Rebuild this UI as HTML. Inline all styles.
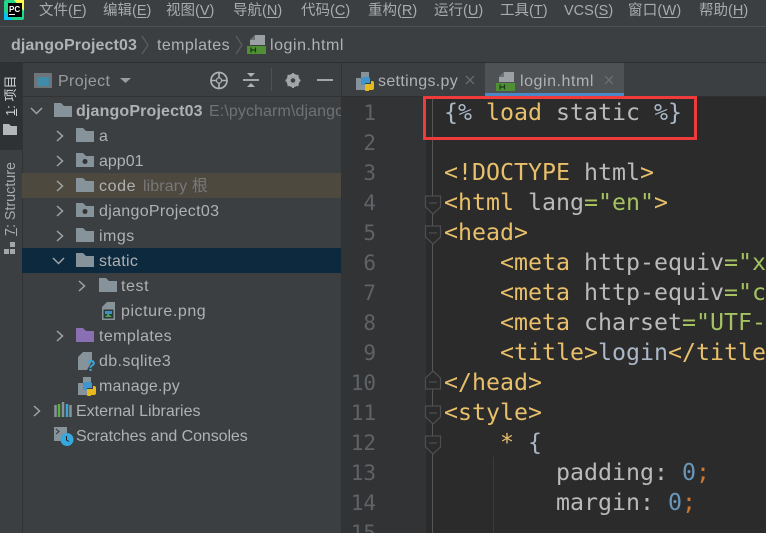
<!DOCTYPE html>
<html><head><meta charset="utf-8">
<style>
html,body{margin:0;padding:0;width:766px;height:533px;overflow:hidden;background:#3c3f41}
body{position:relative;font-family:"Liberation Sans","Noto Sans CJK SC",sans-serif;color:#afb1b3;font-size:15px}
.a{position:absolute;white-space:nowrap}
.b{position:absolute}
.m{top:2px;line-height:18px;font-size:14.5px;color:#a9abad}
.m u{text-decoration-thickness:1px;text-underline-offset:2px}
.t{line-height:25px;height:25px;font-size:16px;color:#afb1b3}
.c{position:absolute;white-space:pre;font-family:"DejaVu Sans Mono","Liberation Mono",monospace;font-size:23.25px;line-height:30px;height:30px;color:#a9b7c6;left:444px}
.n{position:absolute;font-family:"DejaVu Sans Mono","Liberation Mono",monospace;font-size:21px;line-height:30px;height:30px;color:#606366;text-align:right;width:34px;left:342px}
.o{color:#e8bf6a}.g{color:#a5c261}.k{color:#bababa}.w{color:#a9b7c6}.y{color:#e8bf6a}.bl{color:#6897bb}.r{color:#cc7832}
</style></head>
<body>
<!-- bars -->
<div class="b" style="left:0;top:26px;width:766px;height:1px;background:#515151"></div>
<div class="b" style="left:0;top:62px;width:766px;height:1px;background:#2d2f30"></div>
<!-- left strip -->
<div class="b" style="left:0;top:63px;width:22px;height:470px;background:#3c3f41"></div>
<div class="b" style="left:0;top:63px;width:22px;height:87px;background:#2f3234"></div>
<div class="b" style="left:22px;top:63px;width:1px;height:470px;background:#323232"></div>
<!-- editor -->
<div class="b" style="left:342px;top:63px;width:424px;height:470px;background:#3c3f41"></div>
<div class="b" style="left:342px;top:97px;width:424px;height:436px;background:#2b2b2b"></div>
<div class="b" style="left:342px;top:97px;width:84px;height:436px;background:#313335"></div>
<div class="b" style="left:432px;top:97px;width:1px;height:436px;background:#555"></div>
<div class="b" style="left:493px;top:457px;width:1px;height:76px;background:#3b3b3b"></div>
<div class="b" style="left:342px;top:96px;width:424px;height:1px;background:#2d2f30"></div>
<div class="b" style="left:23px;top:96px;width:318px;height:1px;background:#323232"></div>
<!-- tabs -->
<div class="b" style="left:485px;top:63px;width:139px;height:33px;background:#4e5254"></div>
<div class="b" style="left:485px;top:93px;width:139px;height:3px;background:#4a88c7"></div>
<div class="a" style="left:378px;top:71px;font-size:16px;letter-spacing:.33px;line-height:22px;color:#afb1b3">settings.py</div>
<div class="a" style="left:520px;top:71px;font-size:16px;letter-spacing:.55px;line-height:22px;color:#afb1b3">login.html</div>

<!-- menu -->
<div class="a m" style="left:39px">文件(<u>F</u>)</div>
<div class="a m" style="left:103px">编辑(<u>E</u>)</div>
<div class="a m" style="left:166px">视图(<u>V</u>)</div>
<div class="a m" style="left:233px">导航(<u>N</u>)</div>
<div class="a m" style="left:301px">代码(<u>C</u>)</div>
<div class="a m" style="left:368px">重构(<u>R</u>)</div>
<div class="a m" style="left:434px">运行(<u>U</u>)</div>
<div class="a m" style="left:500px">工具(<u>T</u>)</div>
<div class="a m" style="left:564px">VCS(<u>S</u>)</div>
<div class="a m" style="left:628px;letter-spacing:.2px">窗口(<u>W</u>)</div>
<div class="a m" style="left:699px">帮助(<u>H</u>)</div>

<!-- breadcrumb -->
<div class="a" style="left:11px;top:35px;line-height:22px;font-size:16px;letter-spacing:.1px;font-weight:bold;color:#afb1b3">djangoProject03</div>
<div class="a" style="left:157px;top:35px;line-height:22px;font-size:16px;letter-spacing:.4px;color:#afb1b3">templates</div>
<div class="a" style="left:270px;top:35px;line-height:22px;font-size:16px;letter-spacing:.55px;color:#afb1b3">login.html</div>

<!-- project header -->
<div class="a" style="left:58px;top:71px;line-height:22px;font-size:16px;letter-spacing:.35px;color:#9a9c9e">Project</div>

<!-- tree rows -->
<div class="b" style="left:22px;top:173px;width:319px;height:25px;background:#4d493f"></div>
<div class="b" style="left:22px;top:248px;width:319px;height:25px;background:#0d293e"></div>
<div class="a t" style="left:76px;top:99px;font-weight:bold;letter-spacing:.15px">djangoProject03</div>
<div class="a t" style="left:209px;top:99px;width:132px;overflow:hidden;color:#6f7173;letter-spacing:.1px">E:\pycharm\django</div>
<div class="a t" style="left:99px;top:124px">a</div>
<div class="a t" style="left:99px;top:149px">app01</div>
<div class="a t" style="left:99px;top:174px;letter-spacing:.6px">code</div>
<div class="a t" style="left:143px;top:174px;color:#77787a;letter-spacing:.1px">library 根</div>
<div class="a t" style="left:99px;top:199px;letter-spacing:.31px">djangoProject03</div>
<div class="a t" style="left:99px;top:224px;letter-spacing:.5px">imgs</div>
<div class="a t" style="left:99px;top:249px;letter-spacing:.3px">static</div>
<div class="a t" style="left:121px;top:274px;letter-spacing:.6px">test</div>
<div class="a t" style="left:121px;top:299px;letter-spacing:.55px">picture.png</div>
<div class="a t" style="left:99px;top:324px;letter-spacing:.4px">templates</div>
<div class="a t" style="left:99px;top:349px;letter-spacing:.37px">db.sqlite3</div>
<div class="a t" style="left:99px;top:374px;letter-spacing:.2px">manage.py</div>
<div class="a t" style="left:76px;top:399px">External Libraries</div>
<div class="a t" style="left:76px;top:424px;letter-spacing:-.08px">Scratches and Consoles</div>
<div class="b" style="left:341px;top:63px;width:1px;height:470px;background:#323232"></div>

<!-- vertical side labels -->
<div class="a" style="left:2px;top:116px;line-height:18px;font-size:13px;color:#d0d2d4;transform-origin:0 0;transform:rotate(-90deg);"><u>1</u>: 项目</div>
<div class="a" style="left:2px;top:236px;line-height:18px;font-size:14.3px;color:#a9abad;transform-origin:0 0;transform:rotate(-90deg);"><u>7</u>: Structure</div>

<!-- line numbers -->
<div class="n" style="top:98px">1</div>
<div class="n" style="top:128px">2</div>
<div class="n" style="top:158px">3</div>
<div class="n" style="top:188px">4</div>
<div class="n" style="top:218px">5</div>
<div class="n" style="top:248px">6</div>
<div class="n" style="top:278px">7</div>
<div class="n" style="top:308px">8</div>
<div class="n" style="top:338px">9</div>
<div class="n" style="top:368px">10</div>
<div class="n" style="top:398px">11</div>
<div class="n" style="top:428px">12</div>
<div class="n" style="top:458px">13</div>
<div class="n" style="top:488px">14</div>
<div class="n" style="top:518px">15</div>

<!-- code -->
<div class="c" style="top:98px"><span style="color:#a9b7c6">{%</span> <span class="o">load</span> <span class="k">static</span> <span style="color:#a9b7c6">%}</span></div>
<div class="c" style="top:158px"><span class="o">&lt;!DOCTYPE</span> <span class="k">html</span><span class="o">&gt;</span></div>
<div class="c" style="top:188px"><span class="o">&lt;html</span> <span class="k">lang</span><span class="g">="en"</span><span class="o">&gt;</span></div>
<div class="c" style="top:218px"><span class="o">&lt;head&gt;</span></div>
<div class="c" style="top:248px">    <span class="o">&lt;meta</span> <span class="k">http-equiv</span><span class="g">="x</span></div>
<div class="c" style="top:278px">    <span class="o">&lt;meta</span> <span class="k">http-equiv</span><span class="g">="c</span></div>
<div class="c" style="top:308px">    <span class="o">&lt;meta</span> <span class="k">charset</span><span class="g">="UTF-</span></div>
<div class="c" style="top:338px">    <span class="o">&lt;title&gt;</span><span class="w">login</span><span class="o">&lt;/title</span></div>
<div class="c" style="top:368px"><span class="o">&lt;/head&gt;</span></div>
<div class="c" style="top:398px"><span class="o">&lt;style&gt;</span></div>
<div class="c" style="top:428px">    <span class="y">*</span> <span class="w">{</span></div>
<div class="c" style="top:458px">        <span class="k">padding</span><span class="k">:</span> <span class="bl">0</span><span class="r">;</span></div>
<div class="c" style="top:488px">        <span class="k">margin</span><span class="k">:</span> <span class="bl">0</span><span class="r">;</span></div>

<!-- red highlight -->
<div class="b" style="left:423px;top:96px;width:268px;height:38px;border:3px solid #ef3b3b"></div>

<!-- icons -->
<svg class="b" style="left:0;top:0" width="766" height="533" viewBox="0 0 766 533" fill="none">
<defs>
<path id="f" d="M0 0h7l3 3h8v11H0z" fill="#87939a"/>
<path id="cr" d="M0 0l5.500 5L0 10" stroke="#a0a2a4" stroke-width="1.500"/>
<path id="cd" d="M0 0l5.500 5.500L11 0" stroke="#a0a2a4" stroke-width="1.500"/>
<g id="py"><path d="M5 0h8v6H5zM0 6h5v12H0zM5 13h4v5H5z" fill="#87939a"/><path d="M7 5h5a2 2 0 0 1 2 2v4H9v2H5V8a3 3 0 0 1 2-3z" fill="#3f96cf"/><path d="M15 9h1a2 2 0 0 1 2 2v5a2 2 0 0 1-2 2h-6v-4h5z" fill="#e8b91c"/><path d="M9 12h6v3h-2v4h-3a1 1 0 0 1-1-1z" fill="#e8b91c"/></g>
<g id="ht"><path d="M8 0h10v10H3V5z" fill="#9aa0a3"/><path d="M3 5l5-5v5z" fill="#6b7073"/><rect x="0" y="11" width="19" height="8" fill="#4f9034"/><path d="M4 12.500v5M8.500 12.500v5M4 15h4.500" stroke="#1a3a12" stroke-width="1.200"/></g>
</defs>
<!-- PC logo -->
<rect x="4" y="0" width="20" height="20" rx="2" fill="#21d789"/><path d="M14 0h10v11z" fill="#fcf84a"/><path d="M4 11l9 9H4z" fill="#07c3f2"/>
<rect x="8" y="3" width="14" height="14" fill="#000"/><text x="9" y="12" font-family="Liberation Sans" font-weight="bold" font-size="8" fill="#fff">PC</text><rect x="9" y="14" width="6" height="1" fill="#fff"/>
<!-- breadcrumb chevrons -->
<path d="M142 36l6 9-6 9M236 36l6 9-6 9" stroke="#5c5f61" stroke-width="1.200"/>
<use href="#ht" x="247" y="35"/>
<!-- project header icons -->
<rect x="34" y="73" width="18" height="15" fill="#6e7477"/><rect x="37" y="77" width="12" height="9" fill="#3f8ba8"/>
<path d="M120 78h11l-5.500 5z" fill="#9a9c9e"/>
<circle cx="219" cy="80.500" r="8" stroke="#afb1b3" stroke-width="1.700"/><circle cx="219" cy="80.500" r="2.600" stroke="#afb1b3" stroke-width="1.300"/><path d="M219 73v5M219 83v5M211 80.500h5.500M221.500 80.500h5.500" stroke="#afb1b3" stroke-width="1.600"/>
<path d="M243 80h16" stroke="#afb1b3" stroke-width="1.800"/><path d="M247 73h8l-4 4zM247 87h8l-4-4z" fill="#afb1b3"/>
<path d="M271.500 68v23" stroke="#4f5254"/>
<circle cx="293" cy="80.500" r="5" stroke="#a4a6a8" stroke-width="3.200"/><path d="M293 73v15M285.500 80.500h15M287.700 75.200l10.600 10.600M298.300 75.200l-10.600 10.600" stroke="#a4a6a8" stroke-width="2"/><circle cx="293" cy="80.500" r="2.200" fill="#3c3f41"/>
<path d="M317 80h16" stroke="#a4a6a8" stroke-width="2"/>
<!-- side icons -->
<path d="M3 124h6l2 2h6v9H3z" fill="#b4b6b8"/>
<path d="M10 242h5v5h-5zM4 249h5v5H4zM10 249h5v5h-5z" fill="#a4a6a8"/>
<!-- tree chevrons -->
<use href="#cd" x="31" y="108"/>
<use href="#cr" x="57" y="131"/><use href="#cr" x="57" y="156"/><use href="#cr" x="57" y="181"/><use href="#cr" x="57" y="206"/><use href="#cr" x="57" y="231"/>
<use href="#cd" x="53" y="258"/>
<use href="#cr" x="79" y="281"/><use href="#cr" x="57" y="331"/><use href="#cr" x="34" y="406"/>
<!-- folders -->
<use href="#f" x="54" y="103"/><use href="#f" x="76" y="128"/><use href="#f" x="76" y="153"/><use href="#f" x="76" y="178"/><use href="#f" x="76" y="203"/><use href="#f" x="76" y="228"/><use href="#f" x="76" y="253"/><use href="#f" x="99" y="278"/>
<path d="M76 328h7l3 3h8v11H76z" fill="#8b6fb3"/>
<circle cx="85" cy="161.500" r="2.500" fill="#333"/><circle cx="85" cy="211.500" r="2.500" fill="#333"/>
<!-- picture.png -->
<path d="M107 302h8v18h-13v-13z" fill="#87939a"/><rect x="103.500" y="309.500" width="10" height="9" fill="#2e3a36"/><rect x="105" y="311" width="7" height="3" fill="#3f8fc4"/><path d="M105 317l3-3.500 4 3.500z" fill="#4aa05a"/>
<!-- db.sqlite3 -->
<path d="M83 352h9v9l-5 9H78v-13z" fill="#87939a"/><text x="86" y="371" font-family="Liberation Sans" font-weight="bold" font-size="16" fill="#3ba5d8">?</text>
<use href="#py" x="78" y="377"/>
<!-- external libraries -->
<path d="M55.500 405v12" stroke="#87939a" stroke-width="2.500"/><path d="M59 404v13" stroke="#5fae3c" stroke-width="2.500"/><path d="M63 402v15" stroke="#87939a" stroke-width="2.500"/><path d="M67 404v13" stroke="#3ba5d8" stroke-width="2.500"/><path d="M70.500 405v12" stroke="#87939a" stroke-width="2.500"/>
<!-- scratches -->
<path d="M54 427h13v14H54z" fill="#87939a"/><path d="M56 429l3 2.500-3 2.500" stroke="#333" stroke-width="1"/><circle cx="67" cy="439.500" r="6.500" fill="#35a8df"/><path d="M66.500 436v4l2.500 1.500" stroke="#222" stroke-width="1"/>
<!-- tab icons -->
<use href="#py" x="356" y="72"/>
<use href="#ht" x="496" y="72"/>
<path d="M466 76l8 8M474 76l-8 8M605 76l8 8M613 76l-8 8" stroke="#707274" stroke-width="1.200"/>
<!-- fold markers -->
<g stroke="#4c4e50" stroke-width="1.200" fill="#2b2b2b">
<path d="M425.500 196h15v11l-7.500 7-7.500-7z"/><path d="M425.500 226h15v11l-7.500 7-7.500-7z"/>
<path d="M425.500 389h15v-11l-7.500-7-7.500 7z"/><path d="M425.500 406h15v11l-7.500 7-7.500-7z"/><path d="M425.500 436h15v11l-7.500 7-7.500-7z"/>
<path d="M429 203h8M429 233h8M429 382h8M429 413h8M429 443h8" fill="none"/>
</g>
</svg>
</body></html>
